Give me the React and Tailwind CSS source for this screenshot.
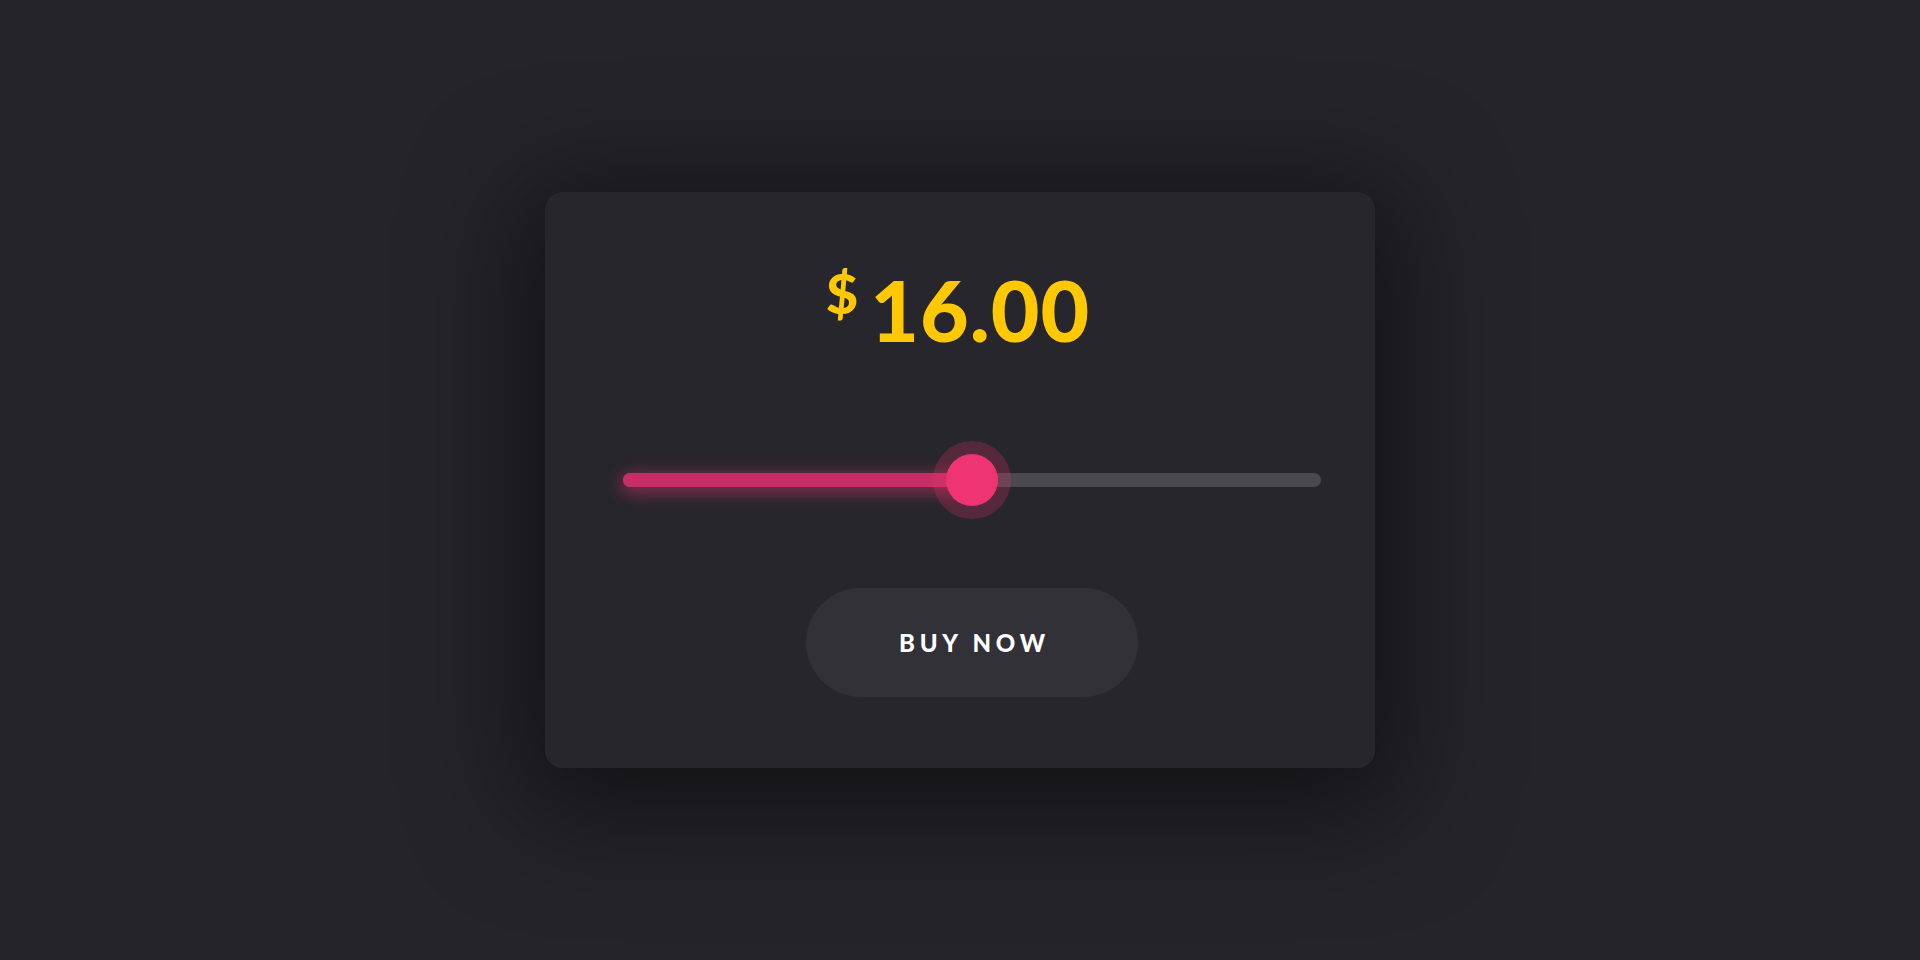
import { useState } from "react";

export default function App() {
    const [value, setValue] = useState(50);

    return (
        <div className="min-h-screen w-full flex items-center justify-center bg-[#252429]" style={{ fontFamily: "Lato, 'Noto Sans', sans-serif" }}>
            {/* Card */}
            <div className="w-[830px] h-[576px] rounded-[18px] bg-[#27262c] shadow-[0_20px_110px_24px_rgba(0,0,0,0.5)] flex flex-col">
                {/* Price */}
                <div className="flex justify-center items-start pt-[76px] pr-[4px] text-[#ffc800] font-black leading-none">
                    <span className="text-[56px] -mt-[3px] mr-[12px]">$</span>
                    <span className="text-[84px] tracking-[1px]">16.00</span>
                </div>

                {/* Slider */}
                <div className="pl-[78px] pr-[54px] mt-[121px]">
                    <div className="relative h-[14px] rounded-full bg-[#4a4950]">
                        <div
                            className="absolute left-0 top-0 h-full rounded-full bg-[#c52f63] shadow-[0_4px_16px_3px_rgba(236,52,114,0.45)]"
                            style={{ width: `${value}%` }}
                        />
                        <div
                            className="absolute top-1/2 -translate-x-1/2 -translate-y-1/2 w-[78px] h-[78px] rounded-full bg-[rgba(236,52,114,0.24)] flex items-center justify-center"
                            style={{ left: `${value}%` }}
                        >
                            <div className="w-[52px] h-[52px] rounded-full bg-[#ee3473]" />
                        </div>
                    </div>
                </div>

                {/* Button */}
                <div className="pl-[78px] pr-[54px] mt-[101px] flex justify-center">
                    <button
                        className="w-[332px] h-[109px] rounded-full bg-[#333138] text-white font-black text-[24px] tracking-[0.2em] pl-[0.2em]"
                        onClick={() => setValue(value)}
                    >
                        BUY NOW
                    </button>
                </div>
            </div>
        </div>
    );
}
